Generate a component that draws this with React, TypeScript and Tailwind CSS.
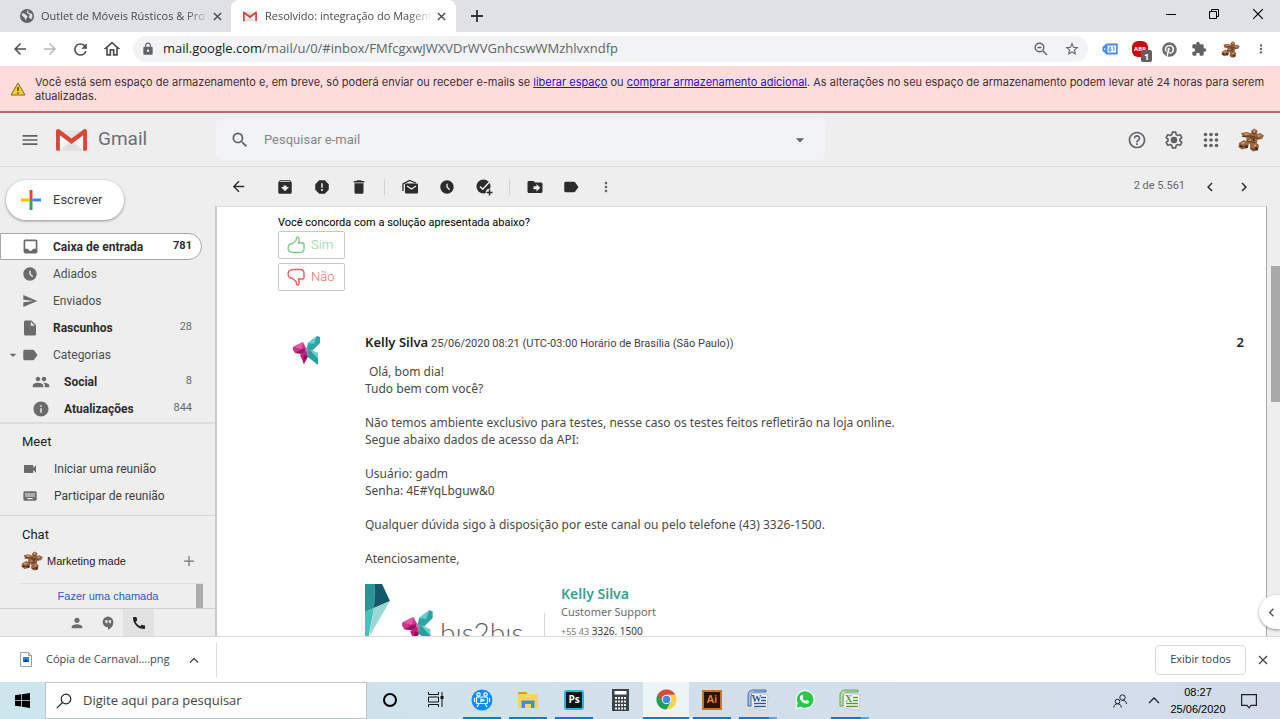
import type { ReactNode } from "react";
import {
  MdAccessTimeFilled, MdArchive, MdArrowBack, MdArrowDropDown, MdArrowForward, MdCall, MdChevronLeft,
  MdChevronRight, MdDelete, MdDriveFileMove, MdExtension, MdHelpOutline, MdInfo, MdInsertDriveFile,
  MdKeyboard, MdLabel, MdLock, MdMenu, MdMoreVert, MdOutlineHome, MdPeople, MdPerson,
  MdRefresh, MdReport, MdSearch, MdSend, MdStarOutline, MdVideocam,
} from "react-icons/md";
import { FaPinterest, FaWhatsapp } from "react-icons/fa";

function GmailMark({ className }: { className: string }) {
  return (
    <svg viewBox="0 0 32 24" className={className} aria-hidden="true">
      <path d="M2 1h28v22H2z" fill="#f3f3f3" />
      <path d="M4 23 16 12l12 11z" fill="#e0e0e0" />
      <path d="M4 2h24L16 12z" fill="#e3e3e3" />
      <path d="M0 3v18.500c0 1 .7 1.500 1.500 1.500H4V7l12 9 12-9v16h2.500c.8 0 1.500-.5 1.500-1.500V3c0-2-2-3-3.500-1.900L16 10.500 3.500 1.100C2 0 0 1 0 3z" fill="#d9473b" />
    </svg>
  );
}

function FlowerAvatar({ className }: { className: string }) {
  return (
    <svg viewBox="0 0 26 24" className={className} aria-hidden="true">
      <g fill="#9a6440">
        <path d="M13 3 16 .5l3.500 2L19 7l-5 1z" />
        <path d="M3 5l6-1 6 2-2 4.500L5 9z" />
        <path d="M17 7l5-2 4 2.500-2 3.500-6 1z" />
        <path d="M9 7h11l-1 8-5 2-6-3z" />
        <path d="M1 15l5-3 5 3-1 5-6 1.500L.5 19z" />
        <path d="M12 16l5-2 4 3-1 5.500-5 1-3-2.500z" />
      </g>
      <g fill="#cf9a6c">
        <path d="M15 2.500 17 2l.5 2.500-2 .5zM6 5.500l4-.3 2 1-4 1zM19.500 7.500l3-.7.5 1.200-3 1zM10 12l3-.5.5 2-2.500.5zM3 15l3-1.200 1.500 1.400L4 16.500zM15.500 17l2-.7 1 1.700-2.500.7z" />
      </g>
      <g fill="none" stroke="#5a3520" strokeWidth="1">
        <path d="M4 8.500 13 8l8 2.500M9 13l8 1.500M1.500 18.500l7 .5M13 21l6 .5M14 4.500l4 1.500M12 9.500l5 1" />
      </g>
      <g fill="#3a2c22">
        <circle cx="8.500" cy="18.500" r="1.500" />
        <circle cx="3" cy="18.300" r="1.200" />
        <circle cx="18.500" cy="20.500" r="1.400" />
        <circle cx="15.500" cy="12" r="1" />
      </g>
    </svg>
  );
}

function BirdMark({ className }: { className: string }) {
  return (
    <svg viewBox="0 0 30 31" className={className} aria-hidden="true">
      <path d="M1 12 11 7l3 6-2 6-9-1-2-3z" fill="#d2308c" />
      <path d="M1 12l9 2 1-7z" fill="#e35aa6" />
      <path d="M3 18l7-4 4-1-2 6z" fill="#9d1566" />
      <path d="M8 20l6-5 3 5-5 9z" fill="#c4207e" />
      <path d="M11 29l1-9 4 1z" fill="#8c1259" />
      <path d="M16 8 25 1l3 1v6l-6 6-8 3z" fill="#2aa6a6" />
      <path d="M16 8 25 1l-3 8z" fill="#6cc9c8" />
      <path d="M14 17l8-3-7 7z" fill="#156f7b" />
      <path d="M13 12l8 4-5 7z" fill="#9a86ab" />
      <path d="M17 14l9 9v7l-10-8z" fill="#20a39f" />
      <path d="M17 14l9 9v-5z" fill="#6ecdca" />
    </svg>
  );
}

function CloseX({ className }: { className: string }) {
  return (
    <svg viewBox="0 0 10 10" className={className} fill="none" stroke="currentColor" aria-hidden="true">
      <path d="M1 1l8 8M9 1 1 9" />
    </svg>
  );
}

function Plus({ className }: { className: string }) {
  return (
    <svg viewBox="0 0 12 12" className={className} fill="none" stroke="currentColor" aria-hidden="true">
      <path d="M6 0v12M0 6h12" />
    </svg>
  );
}

function IconButton({ label, className = "", children }: { label: string; className?: string; children: ReactNode }) {
  return (
    <button type="button" aria-label={label} className={`flex shrink-0 items-center justify-center ${className}`}>
      {children}
    </button>
  );
}

function TabStrip() {
  return (
    <div className="flex h-8 shrink-0 items-stretch bg-[#dee1e6] text-[11px] text-[#45494d]">
      <div className="flex w-[231px] items-center pl-5">
        <svg viewBox="0 0 14 14" className="mr-[7px] size-[14px] shrink-0" aria-hidden="true">
          <circle cx="7" cy="7" r="7" fill="#5f6368" />
          <path d="M2 4.500c2-.5 3 .5 4 1.500s2 .5 1.500 2S6 9 6 11.500C4.500 10 5 9 3.500 8S1.500 6 2 4.500zM8 1.500c1 1 0 2 1 2.500s2 0 3 1c.8 2 .3 4-1 5.500-.5-1.500-2-1-2-2.500s1-1.500.5-2.500S7 5 7 3.500s-.3-1.500 1-2z" fill="#dee1e6" />
        </svg>
        <span className="w-[170px] whitespace-nowrap [mask-image:linear-gradient(to_right,black_85%,transparent)]">Outlet de Móveis Rústicos &amp; Pro</span>
        <IconButton label="Fechar guia" className="ml-[2px]"><CloseX className="size-[9px] stroke-[1.500]" /></IconButton>
      </div>
      <div className="flex w-[225px] items-center rounded-t-lg bg-white pl-3">
        <GmailMark className="mr-2 h-[11px] w-[14px] shrink-0" />
        <span className="w-[168px] whitespace-nowrap [mask-image:linear-gradient(to_right,black_85%,transparent)]">Resolvido: integração do Magent</span>
        <IconButton label="Fechar guia" className="ml-1"><CloseX className="size-[9px] stroke-[1.500]" /></IconButton>
      </div>
      <IconButton label="Nova guia" className="ml-[15px] text-[#303336]"><Plus className="size-[12px] stroke-[1.800]" /></IconButton>
      <div className="ml-auto flex items-center gap-[33px] pr-[16px] pb-[5px] text-black">
        <IconButton label="Minimizar">
          <svg viewBox="0 0 10 10" className="size-[10px]" stroke="currentColor" aria-hidden="true"><path d="M0 5.500h10" /></svg>
        </IconButton>
        <IconButton label="Restaurar">
          <svg viewBox="0 0 10 10" className="size-[10px]" fill="none" stroke="currentColor" aria-hidden="true"><path d="M.5 2.500h7v7h-7zM2.500 2V.5h7v7H8" /></svg>
        </IconButton>
        <IconButton label="Fechar"><CloseX className="size-[12px]" /></IconButton>
      </div>
    </div>
  );
}

function AddressBar() {
  return (
    <div className="flex h-[34px] shrink-0 items-center bg-white pr-3 pl-[11px] text-[#5f6368]">
      <div className="flex items-center gap-3">
        <IconButton label="Voltar" className="text-[#4b4f53]"><MdArrowBack className="size-[18px]" /></IconButton>
        <IconButton label="Avançar" className="text-[#b6b8ba]"><MdArrowForward className="size-[18px]" /></IconButton>
        <IconButton label="Recarregar" className="text-[#4b4f53]"><MdRefresh className="size-[19px]" /></IconButton>
        <IconButton label="Página inicial" className="text-[#4b4f53]"><MdOutlineHome className="size-[20px]" /></IconButton>
      </div>
      <div className="ml-[11px] flex h-[26px] min-w-0 flex-1 items-center rounded-full bg-[#f1f3f4] pr-2 pl-2">
        <MdLock className="mr-2 size-[14px] shrink-0" />
        <div className="min-w-0 flex-1 truncate text-[13px]">
          <span className="text-[#202124]">mail.google.com</span>/mail/u/0/#inbox/FMfcgxwJWXVDrWVGnhcswWMzhlvxndfp
        </div>
        <IconButton label="Zoom" className="mr-4">
          <svg viewBox="0 0 14 14" className="size-[14px]" fill="none" stroke="currentColor" strokeWidth="1.400" aria-hidden="true">
            <circle cx="5.500" cy="5.500" r="4.300" /><path d="m9 9 4 4M3.500 5.500h4" />
          </svg>
        </IconButton>
        <IconButton label="Favoritos"><MdStarOutline className="size-[16px]" /></IconButton>
      </div>
      <div className="ml-[14px] flex items-center gap-[14px]">
        <IconButton label="Extensão de etiquetas">
          <svg viewBox="0 0 16 12" className="h-3 w-4" aria-hidden="true">
            <path d="M4.500.5H15a.7.700 0 0 1 .7.700v9.600a.7.700 0 0 1-.7.700H4.500L.5 8V4z" fill="#4a8af4" />
            <path d="M5.500 2.500h8.500v7H5.500z" fill="#fff" />
            <path d="M7 4h1.500v1.700H7V8h2V6M10.500 4h1.500v4" fill="none" stroke="#4a8af4" />
            <circle cx="2.800" cy="6" r=".8" fill="#fff" />
          </svg>
        </IconButton>
        <IconButton label="AdBlock Plus" className="relative">
          <span className="flex size-4 items-center justify-center rounded-[6px] bg-[#c70d0d] text-[6px] leading-none font-bold text-white">ABP</span>
          <span className="absolute top-[9px] left-[9px] flex h-[12px] w-[11px] items-center justify-center rounded-[2px] bg-[#606060] text-[9px] leading-none font-bold text-white">1</span>
        </IconButton>
        <IconButton label="Pinterest" className="text-[#6b6f73]"><FaPinterest className="size-[15px]" /></IconButton>
        <IconButton label="Extensões"><MdExtension className="size-[16px]" /></IconButton>
        <IconButton label="Perfil"><FlowerAvatar className="h-[17px] w-[19px]" /></IconButton>
        <IconButton label="Menu do Chrome" className="w-[14px]"><MdMoreVert className="size-[16px]" /></IconButton>
      </div>
    </div>
  );
}

function StorageBanner() {
  return (
    <div role="alert" className="flex shrink-0 items-center gap-[9px] border-b-2 border-[#b96a6a] bg-[#ffdcdc] pt-[9px] pr-[10px] pb-[8px] pl-[10px] font-[Inter,sans-serif] text-[11px] leading-[14px] text-[#3b3030]">
      <svg viewBox="0 0 16 14" className="h-[14px] w-4 shrink-0" aria-hidden="true">
        <path d="M8 1 15 13H1z" fill="#f3cf2a" stroke="#7d6a18" strokeLinejoin="round" />
        <path d="M8 5v4M8 10.300v1.400" stroke="#4c3c00" strokeWidth="1.400" />
      </svg>
      <p>
        Você está sem espaço de armazenamento e, em breve, só poderá enviar ou receber e-mails se{" "}
        <a href="#liberar" className="text-[#2a10d8] underline">liberar espaço</a> ou{" "}
        <a href="#comprar" className="text-[#2a10d8] underline">comprar armazenamento adicional</a>. As alterações no seu espaço de armazenamento podem levar até 24 horas para serem atualizadas.
      </p>
    </div>
  );
}

function GmailHeader() {
  return (
    <header className="flex h-[54px] shrink-0 items-center border-b border-[#dfdfdf] pr-4 text-[#5f6368]">
      <div className="flex w-[216px] shrink-0 items-center pl-5">
        <IconButton label="Menu principal"><MdMenu className="size-5" /></IconButton>
        <GmailMark className="ml-4 h-6 w-[31px]" />
        <span className="ml-[11px] text-[19px] text-[#6b6f73]">Gmail</span>
      </div>
      <form className="flex h-[41px] w-[609px] shrink items-center rounded-md bg-[#f1f3f4]">
        <IconButton label="Pesquisar" className="ml-[14px]"><MdSearch className="size-5" /></IconButton>
        <input aria-label="Pesquisar e-mail" placeholder="Pesquisar e-mail" className="ml-[14px] min-w-0 flex-1 bg-transparent text-[13px] outline-none placeholder:text-[#84888c]" />
        <IconButton label="Opções de pesquisa" className="mr-[15px]"><MdArrowDropDown className="size-5" /></IconButton>
      </form>
      <div className="ml-auto flex items-center gap-[17px]">
        <IconButton label="Ajuda"><MdHelpOutline className="size-5" /></IconButton>
        <IconButton label="Configurações">
          <svg viewBox="0 0 24 24" className="size-5" fill="none" stroke="currentColor" strokeWidth="2" strokeLinejoin="round" aria-hidden="true">
            <path d="M10 2.500h4l.6 3 1.900 1.100 2.900-1 2 3.500-2.300 2v1.800l2.300 2-2 3.500-2.900-1-1.900 1.100-.6 3h-4l-.6-3-1.900-1.100-2.900 1-2-3.500 2.300-2v-1.800l-2.300-2 2-3.500 2.900 1 1.900-1.100z" />
            <circle cx="12" cy="12" r="3" fill="currentColor" />
          </svg>
        </IconButton>
        <IconButton label="Google Apps">
          <svg viewBox="0 0 20 20" className="size-5" fill="currentColor" aria-hidden="true">
            {[4.5, 10, 15.5].map((y) => [4.5, 10, 15.5].map((x) => <circle key={`${x}-${y}`} cx={x} cy={y} r="1.800" />))}
          </svg>
        </IconButton>
        <IconButton label="Conta do Google"><FlowerAvatar className="h-6 w-[26px]" /></IconButton>
      </div>
    </header>
  );
}

type Folder = { label: string; icon: ReactNode; count?: string; bold?: boolean; nested?: boolean; active?: boolean; caret?: boolean };

const inboxIcon = (
  <svg viewBox="0 0 16 16" className="size-[15px]" fill="none" stroke="currentColor" strokeWidth="1.800" aria-hidden="true">
    <rect x="1.500" y="1.500" width="13" height="13" rx="1" />
    <path d="M2 10.500h3.500c.5 3 4.500 3 5 0H14v4H2z" fill="currentColor" stroke="none" />
  </svg>
);

const folders: Folder[] = [
  { label: "Caixa de entrada", icon: inboxIcon, count: "781", bold: true, active: true },
  { label: "Adiados", icon: <MdAccessTimeFilled className="size-4" /> },
  { label: "Enviados", icon: <MdSend className="size-4" /> },
  { label: "Rascunhos", icon: <MdInsertDriveFile className="size-[18px]" />, count: "28", bold: true },
  { label: "Categorias", icon: <MdLabel className="size-[18px]" />, caret: true },
  { label: "Social", icon: <MdPeople className="size-[18px]" />, count: "8", bold: true, nested: true },
  { label: "Atualizações", icon: <MdInfo className="size-[18px]" />, count: "844", bold: true, nested: true },
];

function FolderRow({ label, icon, count, bold, nested, active, caret }: Folder) {
  return (
    <li>
      <a
        href="#pasta"
        className={`relative mr-[13px] flex h-[27px] items-center rounded-r-full border pr-[9px] ${nested ? "pl-[31px]" : "pl-5"} ${active ? "border-[#a6a6a6] bg-white" : "border-transparent"} ${bold ? "font-bold text-[#2b2d2f]" : "text-[#4b4e51]"}`}
      >
        {caret && <MdArrowDropDown className="absolute left-1 size-4 text-[#6b6b6b]" />}
        <span className="flex w-[18px] shrink-0 justify-center text-[#6b6b6b]">{icon}</span>
        <span className="ml-[14px] flex-1">{label}</span>
        {count && <span className={`text-[11px] ${active ? "font-bold" : "font-normal text-[#66696c]"}`}>{count}</span>}
      </a>
    </li>
  );
}

function Sidebar() {
  return (
    <aside className="flex w-[215px] shrink-0 flex-col text-[12px]">
      <button type="button" className="mt-[13px] ml-[6px] flex h-10 w-[118px] shrink-0 items-center rounded-full bg-white pl-[15px] text-[13px] text-[#3c4043] shadow-[0_1px_3px_rgba(0,0,0,0.4)]">
        <svg viewBox="0 0 20 20" className="mr-3 size-5" aria-hidden="true">
          <path d="M8.500 0h3v10h-3z" fill="#ea4335" />
          <path d="M8.500 10h3v10h-3z" fill="#34a853" />
          <path d="M0 8.500h8.500v3H0z" fill="#fbbc04" />
          <path d="M11.500 8.500H20v3h-8.500z" fill="#4285f4" />
        </svg>
        Escrever
      </button>
      <nav aria-label="Pastas" className="mt-[13px] border-b-2 border-[#dcdcdc]">
        <ul>{folders.map((f) => <FolderRow key={f.label} {...f} />)}</ul>
      </nav>
      <section className="border-b border-[#d8d8d8] pt-[8px] pb-[6px] text-[#3c4043]">
        <h2 className="mb-[3px] pl-[22px] text-[13px] leading-5 text-[#202124]">Meet</h2>
        <a href="#iniciar" className="flex h-[27px] items-center pl-[22px]"><MdVideocam className="mr-4 size-4 text-[#6b6b6b]" />Iniciar uma reunião</a>
        <a href="#participar" className="flex h-[27px] items-center pl-[22px]"><MdKeyboard className="mr-4 size-4 text-[#6b6b6b]" />Participar de reunião</a>
      </section>
      <section className="flex min-h-0 flex-1 flex-col overflow-hidden">
        <h2 className="mt-[9px] pl-[22px] text-[13px] leading-5 text-[#202124]">Chat</h2>
        <div className="mt-[2px] flex h-7 items-center pl-[21px] font-['Liberation_Sans',sans-serif] text-[11px] text-[#222]">
          <FlowerAvatar className="h-5 w-[22px]" />
          <span className="ml-1 whitespace-nowrap">Marketing made</span>
          <IconButton label="Nova conversa" className="mr-[21px] ml-auto text-[#777]"><Plus className="size-[10px] stroke-[1.500]" /></IconButton>
        </div>
        <div className="mt-[8px] mr-3 ml-5 flex flex-1 border-t border-[#dedede] font-['Liberation_Sans',sans-serif] text-[11px]">
          <a href="#chamada" className="flex flex-1 items-center justify-center text-[#2a5bd0]">Fazer uma chamada</a>
          <span className="w-[7px] bg-[#acacac]" />
        </div>
      </section>
      <div className="flex h-7 shrink-0 items-center justify-center border-t border-[#cfcfcf] text-[#6b6b6b]">
        <IconButton label="Contatos" className="h-full w-[31px]"><MdPerson className="size-4" /></IconButton>
        <IconButton label="Hangouts" className="h-full w-[31px]">
          <svg viewBox="0 0 14 16" className="h-[14px] w-3" aria-hidden="true">
            <path d="M7 .5a6.300 6.300 0 0 0 0 12.600V16c4-2 6.300-5 6.300-9.200A6.300 6.300 0 0 0 7 .5z" fill="currentColor" />
            <path d="M3.700 4.700h2.700v3L5 9V7.400H3.700zM7.800 4.700h2.700v3L9.200 9V7.400H7.800z" fill="#eee" />
          </svg>
        </IconButton>
        <IconButton label="Telefone" className="h-full w-[31px] bg-[#e2e2e2] text-[#222]"><MdCall className="size-4" /></IconButton>
      </div>
    </aside>
  );
}

function MessageToolbar() {
  return (
    <div className="flex h-[39px] shrink-0 items-center pl-[15px] text-[#2c2c2c]">
      <IconButton label="Voltar"><MdArrowBack className="size-[17px]" /></IconButton>
      <div className="ml-[29px] flex items-center gap-[19px]">
        <IconButton label="Arquivar"><MdArchive className="size-[18px]" /></IconButton>
        <IconButton label="Denunciar spam"><MdReport className="size-[18px]" /></IconButton>
        <IconButton label="Excluir"><MdDelete className="size-[18px]" /></IconButton>
      </div>
      <span className="mx-4 h-4 w-px bg-[#d4d4d4]" />
      <div className="flex items-center gap-[20px]">
        <IconButton label="Marcar como não lida">
          <svg viewBox="0 0 18 18" className="size-[18px]" aria-hidden="true">
            <path d="M2 13V6l6.500-3.500L15 5" fill="none" stroke="currentColor" strokeWidth="1.300" />
            <rect x="4" y="5.500" width="13" height="10" rx="1" fill="currentColor" />
            <path d="m6 8 4.500 3L15 8" fill="none" stroke="#eee" strokeWidth="1.300" />
          </svg>
        </IconButton>
        <IconButton label="Adiar"><MdAccessTimeFilled className="size-4" /></IconButton>
        <IconButton label="Adicionar às tarefas">
          <svg viewBox="0 0 18 18" className="size-[18px]" aria-hidden="true">
            <circle cx="8.500" cy="8.500" r="7" fill="currentColor" />
            <path d="m5 8.500 2.700 2.700L15 3.500" fill="none" stroke="#eee" strokeWidth="1.500" />
            <circle cx="14.500" cy="14.500" r="3.800" fill="#eee" />
            <path d="M14.500 11.500v6M11.500 14.500h6" stroke="currentColor" strokeWidth="1.500" />
          </svg>
        </IconButton>
      </div>
      <span className="mx-4 h-4 w-px bg-[#d4d4d4]" />
      <div className="flex items-center gap-[18px]">
        <IconButton label="Mover para"><MdDriveFileMove className="size-[18px]" /></IconButton>
        <IconButton label="Marcadores"><MdLabel className="size-[18px]" /></IconButton>
        <IconButton label="Mais" className="text-[#666]"><MdMoreVert className="size-4" /></IconButton>
      </div>
      <div className="ml-auto flex items-center pr-[27px]">
        <span className="mr-4 text-[11px] text-[#66696c]">2 de 5.561</span>
        <IconButton label="Mais recentes"><MdChevronLeft className="size-[18px]" /></IconButton>
        <IconButton label="Mais antigas" className="ml-4"><MdChevronRight className="size-[18px]" /></IconButton>
      </div>
    </div>
  );
}

const bodyLines = [
  "Tudo bem com você?",
  "",
  "Não temos ambiente exclusivo para testes, nesse caso os testes feitos refletirão na loja online.",
  "Segue abaixo dados de acesso da API:",
  "",
  "Usuário: gadm",
  "Senha: 4E#YqLbguw&0",
  "",
  "Qualquer dúvida sigo à disposição por este canal ou pelo telefone (43) 3326-1500.",
  "",
  "Atenciosamente,",
];

const thumb = "M2.500 8.500l3-1 3.500-3C9.500 3 9 1 10.500 1c2 0 2 3 1 6H15c2 0 2.300 1.500 2 2.500v4c-.3 2-1.500 3-4 3H7c-2 0-3.500-.3-5-1.500C.8 13.500.8 10 2.500 8.500z";

function Message() {
  return (
    <article className="min-w-0 flex-1 overflow-hidden border-t border-r border-l-2 border-t-[#dcdcdc] border-r-[#a8a8a8] border-l-[#c9c9c9] bg-white pt-[8px] pl-[61px]">
      <p className="text-[11px] leading-4 text-black">Você concorda com a solução apresentada abaixo?</p>
      <div className="flex flex-col items-start gap-[4px] text-[13px] font-light">
        <button type="button" className="flex h-7 w-[67px] items-center rounded-[2px] border border-[#c8c8c8] pl-[8px] text-[#8fd294]">
          <svg viewBox="0 0 18 18" className="mr-[6px] size-[18px]" fill="none" stroke="#7cca83" strokeWidth="1.400" strokeLinejoin="round" aria-hidden="true"><path d={thumb} /></svg>
          Sim
        </button>
        <button type="button" className="flex h-7 w-[67px] items-center rounded-[2px] border border-[#c8c8c8] pl-[8px] text-[#ee6e6e]">
          <svg viewBox="0 0 18 18" className="mr-[6px] size-[18px] -scale-y-100" fill="none" stroke="#ea5a5a" strokeWidth="1.400" strokeLinejoin="round" aria-hidden="true"><path d={thumb} /></svg>
          Não
        </button>
      </div>
      <div className="mt-[42px] flex items-start">
        <BirdMark className="mt-[2px] ml-[14px] h-[31px] w-[30px]" />
        <div className="ml-[43px] min-w-0 flex-1">
          <div className="flex items-baseline pr-[22px] text-[11px] leading-[18px] text-[#3f3f3f]">
            <h3 className="mr-[3px] font-['Noto_Sans',sans-serif] text-[13px] font-semibold text-[#1f1f1f]">Kelly Silva</h3>
            <span>25/06/2020 08:21 (UTC-03:00 Horário de Brasília (São Paulo))</span>
            <span className="ml-auto font-['Noto_Sans',sans-serif] text-[13px] font-semibold text-[#1f1f1f]">2</span>
          </div>
          <div className="mt-[10px] font-['Noto_Sans',sans-serif] text-[12px] leading-[17px] text-[#4a4a4a]">
            <p className="pl-1">Olá, bom dia!</p>
            {bodyLines.map((line, i) => <p key={i} className="min-h-[17px]">{line}</p>)}
          </div>
          <div className="mt-[17px] flex items-start">
            <svg viewBox="0 0 26 56" className="h-14 w-[26px]" aria-hidden="true">
              <path d="M0 0h10L9 24 0 28z" fill="#2b9494" />
              <path d="M10 0h7l8 17L9 24z" fill="#14586b" />
              <path d="M0 28l9-4L3 56H0z" fill="#45c4be" />
              <path d="M9 24l16-7L4 53z" fill="#9bd8d3" />
            </svg>
            <BirdMark className="mt-[25px] ml-[9px] h-[35px] w-[36px]" />
            <span className="mt-[31px] ml-[4px] w-[104px] font-[Lato,sans-serif] text-[28px] leading-[34px] font-light text-[#5e5e5e]">bıs2bıs</span>
            <span className="mt-[29px] h-12 w-px bg-[#d5d5d5]" />
            <div className="ml-[16px] font-['Noto_Sans',sans-serif]">
              <p className="text-[14px] leading-[20px] font-semibold text-[#38a093]">Kelly Silva</p>
              <p className="text-[11px] leading-4 text-[#6b6b6b]">Customer Support</p>
              <p className="mt-[3px] text-[10px] leading-4 text-[#3c3c3c]"><span className="text-[9px] text-[#777]">+55 43</span> 3326. 1500</p>
            </div>
          </div>
        </div>
      </div>
    </article>
  );
}

function DownloadShelf() {
  return (
    <div className="flex h-[46px] shrink-0 items-center border-t border-[#dcdcdc] bg-white text-[11px] text-[#45494d]">
      <div className="flex h-[34px] w-[217px] items-center border-r border-[#dcdcdc] pl-5">
        <svg viewBox="0 0 12 15" className="mr-[14px] h-[15px] w-3 shrink-0" aria-hidden="true">
          <path d="M.5.5h8l3 3v11H.5z" fill="#fff" stroke="#9aa0a6" />
          <path d="M8.500.5v3h3" fill="none" stroke="#9aa0a6" />
          <path d="M3 5h6v5H3z" fill="#1e88e5" /><path d="M3 10l3-3 3 3z" fill="#12457a" />
        </svg>
        <span className="whitespace-nowrap">Cópia de Carnaval....png</span>
        <IconButton label="Opções do download" className="mr-[17px] ml-auto">
          <svg viewBox="0 0 10 6" className="h-[6px] w-[10px]" fill="none" stroke="currentColor" strokeWidth="1.400" aria-hidden="true"><path d="m1 5.500 4-4 4 4" /></svg>
        </IconButton>
      </div>
      <button type="button" className="ml-auto h-[30px] w-[91px] rounded border border-[#d5d8dc] text-[#3c4043]">Exibir todos</button>
      <IconButton label="Fechar barra de downloads" className="mr-[12px] ml-[12px]"><CloseX className="size-[10px] stroke-[1.400]" /></IconButton>
    </div>
  );
}

function TaskItem({ label, open, active, split, children }: { label: string; open?: boolean; active?: boolean; split?: boolean; children: ReactNode }) {
  return (
    <button type="button" aria-label={label} className={`flex h-full w-[46px] flex-col items-center ${active ? "bg-[#edf4f8]" : "px-1"}`}>
      <span className="flex flex-1 items-center">{children}</span>
      <span className="flex h-[2px] w-full">
        {open && <span className="flex-1 bg-[#0f79d1]" />}
        {split && <span className="w-2 bg-[#62a6df]" />}
      </span>
    </button>
  );
}

function OfficeIcon({ letter, main, light }: { letter: string; main: string; light: string }) {
  return (
    <svg viewBox="0 0 22 22" className="size-[22px]" aria-hidden="true">
      <path d="M1 6c0-3 2-5 5-5h13v2H9C5 3 4 6 4 9v8H1z" fill={light} stroke={main} strokeWidth=".8" />
      <path d="M5 4l16 2-1 15-15-2z" fill="#fff" stroke="#b5b9c2" strokeWidth=".7" />
      <path d="M14 8.500h5M14 11.500h5M7 14.500h12M7 17.500h12" stroke={main} strokeWidth="1.700" />
      <text x="9.500" y="12.500" textAnchor="middle" fontSize="10" fontWeight="700" fontFamily="Liberation Serif, serif" fill={main}>{letter}</text>
    </svg>
  );
}

function Taskbar() {
  return (
    <footer className="flex h-[37px] shrink-0 items-stretch bg-linear-to-r from-[#cce6ee] via-[#d2e0ea] to-[#d3dbea] font-['Open_Sans',sans-serif] text-black">
      <IconButton label="Iniciar" className="w-[45px]">
        <svg viewBox="0 0 16 16" className="size-[15px]" aria-hidden="true"><path d="M0 2.300 6.500 1.400v6H0zM7.300 1.300 16 0v7.400H7.300zM0 8.300h6.500v6.200L0 13.600zM7.300 8.300H16V16l-8.700-1.300z" /></svg>
      </IconButton>
      <label className="flex w-[322px] items-center border border-[#bfc5c9] bg-white pl-[10px]">
        <svg viewBox="0 0 16 16" className="mr-[11px] size-4 shrink-0" fill="none" stroke="#222" strokeWidth="1.200" aria-hidden="true"><circle cx="10" cy="6" r="4.800" /><path d="M6.500 9.500.8 15.200" /></svg>
        <input aria-label="Pesquisar no Windows" placeholder="Digite aqui para pesquisar" className="min-w-0 flex-1 bg-transparent text-[13px] outline-none placeholder:text-[#444]" />
      </label>
      <div className="flex items-stretch">
        <TaskItem label="Cortana"><span className="size-[14px] rounded-full border-2 border-black" /></TaskItem>
        <TaskItem label="Visão de tarefas">
          <svg viewBox="0 0 16 15" className="h-[15px] w-4" fill="none" stroke="#111" aria-hidden="true"><path d="M.5 0v2.500h10V0M.5 5h10v5H.5zM.5 15v-2.500h10V15M14 0v15" /><path d="M14 4v3" strokeWidth="3" /></svg>
        </TaskItem>
        <TaskItem label="Assistente" open>
          <svg viewBox="0 0 22 22" className="size-[22px]" aria-hidden="true">
            <circle cx="11" cy="11" r="10.500" fill="#0d8bff" />
            <g fill="none" stroke="#fff" strokeWidth="1.200"><circle cx="7.500" cy="5.500" r="1.700" /><circle cx="14.500" cy="5.500" r="1.700" /><rect x="5.500" y="8" width="11" height="6.500" rx="1" /><path d="M8 14.500 6 18M14 14.500l2 3.500M10 10l3 1.300-3 1.300zM3.500 9v4M18.500 9v4" /></g>
          </svg>
        </TaskItem>
        <TaskItem label="Explorador de Arquivos" open>
          <svg viewBox="0 0 20 18" className="h-[18px] w-5" aria-hidden="true"><path d="M0 1h8l1.500 2H0z" fill="#d89a20" /><path d="M0 3h20v14H0z" fill="#fbd45f" /><path d="M3.500 17V9.500h13V17H13v-4H7v4z" fill="#3d92d0" /></svg>
        </TaskItem>
        <TaskItem label="Photoshop" open><span className="flex size-[20px] items-center justify-center rounded-[3px] border-2 border-[#25b5d6] bg-[#04141c] text-[10px] font-bold text-white">Ps</span></TaskItem>
        <TaskItem label="Calculadora">
          <svg viewBox="0 0 17 22" className="h-[22px] w-[17px]" aria-hidden="true">
            <path d="M0 0h17v22H0z" fill="#3e4348" /><path d="M2.500 2h12v3.500h-12z" fill="#fff" />
            {[8, 11.5, 15, 18.5].map((y) => [3, 6, 9, 12].map((x) => <rect key={`${x}-${y}`} x={x} y={y} width="2" height="2" fill="#e8eef2" />))}
          </svg>
        </TaskItem>
        <TaskItem label="Google Chrome" open active>
          <svg viewBox="0 0 22 22" className="size-[21px]" aria-hidden="true">
            <path d="M11 11 1.900 5.700A10.500 10.500 0 0 0 11 21.500l4.500-8z" fill="#1f9e57" />
            <path d="M11 6h9.300A10.500 10.500 0 0 1 11 21.500l5-8z" fill="#fdd04e" />
            <path d="M11 6h9.300l-.2-.3A10.500 10.500 0 0 0 1.900 5.700L6.500 13z" fill="#d94a3f" />
            <circle cx="11" cy="11" r="5" fill="#fff" /><circle cx="11" cy="11" r="4" fill="#4387f0" />
          </svg>
        </TaskItem>
        <TaskItem label="Illustrator" open><span className="flex size-[20px] items-center justify-center border-2 border-[#c8762b] bg-[#2c1402] text-[11px] font-semibold text-[#f58a1f]">Ai</span></TaskItem>
        <TaskItem label="Word" open split><OfficeIcon letter="W" main="#2b579a" light="#a8c0e6" /></TaskItem>
        <TaskItem label="WhatsApp">
          <svg viewBox="0 0 22 22" className="size-[21px]" aria-hidden="true">
            <path d="M2 20.500 3.300 15A9.300 9.300 0 1 1 7 19z" fill="#2cc64f" stroke="#f4fbf6" strokeWidth="1.200" />
            <path d="M7.500 6.500c1-.8 1.700-.3 2 .8l.4 1.200-.9 1.200c.7 1.500 1.700 2.400 3.200 3l1.200-1.100c1 .4 2.400.8 2.300 1.700-.2 1.800-2 2.300-3.500 2-3-.6-5.800-3.500-6-6.200 0-1 .4-2 1.300-2.600z" fill="#fff" />
          </svg>
        </TaskItem>
        <TaskItem label="Excel" open split><OfficeIcon letter="X" main="#4f9a35" light="#b9dfa8" /></TaskItem>
      </div>
      <div className="ml-auto flex items-center">
        <svg viewBox="0 0 14 14" className="size-[14px]" fill="none" stroke="#222" aria-hidden="true"><circle cx="9.500" cy="3.500" r="2.700" /><path d="M9 6.500c2.500-.5 4.500 1 4.500 3.500" /><circle cx="4.500" cy="7.500" r="2.300" /><path d="M.8 13.500c0-5 7.500-5 7.500 0" /></svg>
        <IconButton label="Mostrar ícones ocultos" className="ml-[21px]">
          <svg viewBox="0 0 12 7" className="h-[7px] w-3" fill="none" stroke="#222" strokeWidth="1.300" aria-hidden="true"><path d="m1 6 5-5 5 5" /></svg>
        </IconButton>
        <div className="ml-[10px] w-[56px] text-center font-['Liberation_Sans',sans-serif] text-[11px] leading-[17px] whitespace-nowrap"><p>08:27</p><p>25/06/2020</p></div>
        <IconButton label="Notificações" className="mr-[23px] ml-[15px]">
          <svg viewBox="0 0 16 16" className="size-4" fill="none" stroke="#222" strokeWidth="1.200" aria-hidden="true"><path d="M.6 1.600h14.800v10.800H10L8 14.800l-2-2.400H.6z" /></svg>
        </IconButton>
      </div>
    </footer>
  );
}

export default function App() {
  return (
    <div className="flex h-screen flex-col overflow-hidden bg-[#eee] font-['Open_Sans',sans-serif]">
      <TabStrip />
      <AddressBar />
      <StorageBanner />
      <div className="flex min-h-0 flex-1 flex-col font-[Roboto,sans-serif]">
        <GmailHeader />
        <div className="flex min-h-0 flex-1">
          <Sidebar />
          <main className="flex min-w-0 flex-1 flex-col">
            <MessageToolbar />
            <div className="relative flex min-h-0 flex-1">
              <Message />
              <div className="flex w-[13px] shrink-0 justify-end pt-[60px]"><span className="h-[136px] w-[9px] bg-[#a9a9a9]" /></div>
              <button type="button" aria-label="Mostrar painel lateral" className="absolute right-0 bottom-[7px] flex h-[34px] w-[21px] items-center justify-end rounded-l-full bg-white text-[#555] shadow-[0_1px_3px_rgba(0,0,0,0.4)]"><MdChevronLeft className="size-[17px]" /></button>
            </div>
          </main>
        </div>
      </div>
      <DownloadShelf />
      <Taskbar />
    </div>
  );
}
